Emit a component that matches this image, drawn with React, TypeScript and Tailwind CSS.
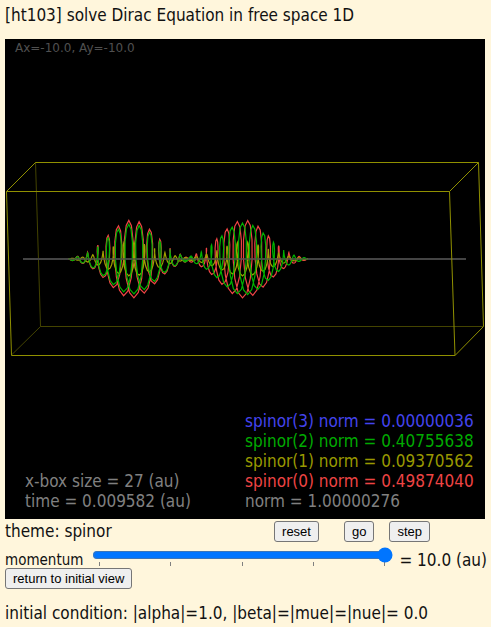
import { useState, type ReactNode } from "react";

type Packet = { center: number; amplitude: number; phaseX: number };

const AXIS_Y = 220;
const PERIOD = 10.3;
const SIGMA = 23.7;
const REACH = 64;
const STEPS = 12;

const LEFT = 127;
const RIGHT = 239;

/** Projects a complex wave packet as a spiral wound round the x axis. */
function spiral({ center, amplitude, phaseX }: Packet) {
  const points: string[] = [];
  for (let i = -7 * STEPS; i <= 7 * STEPS; i++) {
    const theta = (i / STEPS) * 2 * Math.PI;
    const x = phaseX + (theta / (2 * Math.PI)) * PERIOD;
    if (Math.abs(x - center) > REACH) continue;
    const envelope = amplitude * Math.exp(-((x - center) ** 2) / (2 * SIGMA ** 2));
    const px = x - envelope * 0.18 * Math.sin(theta);
    const py = AXIS_Y - envelope * Math.cos(theta);
    points.push(`${px.toFixed(1)},${py.toFixed(1)}`);
  }
  return points.join(" ");
}

const curves = [
  { color: "#ee4444", packet: { center: LEFT, amplitude: 39, phaseX: 123.8 } },
  { color: "#ee4444", packet: { center: RIGHT, amplitude: 39, phaseX: 242.7 } },
  { color: "#a0a000", packet: { center: LEFT, amplitude: 17, phaseX: 129 } },
  { color: "#a0a000", packet: { center: RIGHT, amplitude: 17, phaseX: 242.7 } },
  { color: "#00b400", packet: { center: LEFT, amplitude: 35, phaseX: 123.8 } },
  { color: "#00b400", packet: { center: RIGHT, amplitude: 36, phaseX: 237.5 } },
];

function Scene() {
  return (
    <svg viewBox="0 0 480 480" className="block w-full" fill="none" role="img" aria-label="Dirac spinor wave packets">
      <g stroke="#444400">
        <path d="M30.5 123L35.5 287.5H478" />
        <path d="M35.5 287.5L7 315.5" />
      </g>
      <path d="M18 220H461" stroke="#444444" strokeWidth="2" />
      {curves.map(({ color, packet }, i) => (
        <polyline key={i} points={spiral(packet)} stroke={color} strokeWidth="1.2" />
      ))}
      <path d="M18 220H461" stroke="#444444" strokeWidth="2" opacity="0.6" />
      <g stroke="#909000">
        <path d="M1.5 152.5H444.5L450 316.5H6.5Z" />
        <path d="M1.5 152.5L30.5 123.5H473.5L444.5 152.5" />
        <path d="M450 316.5L478.5 287.5L473.5 123.5" />
      </g>
    </svg>
  );
}

function Button({ children, onClick }: { children: ReactNode; onClick?: () => void }) {
  return (
    <button
      type="button"
      onClick={onClick}
      className="h-[21px] rounded-[3px] border border-[#767676] bg-[#efefef] px-[7px] font-['Liberation_Sans',sans-serif] text-[13px] leading-[19px] text-black"
    >
      {children}
    </button>
  );
}

export default function App() {
  const [momentum, setMomentum] = useState(10);

  return (
    <main className="min-h-screen bg-[#fff6dc] pr-1.5 pl-[5px] font-['DejaVu_Sans_Condensed','DejaVu_Sans',sans-serif] text-[17px] leading-6 text-[#111]">
      <h1 className="pt-[3px] pb-3">[ht103] solve Dirac Equation in free space 1D</h1>

      <section className="relative bg-black">
        <Scene />
        <p className="absolute top-0 left-2.5 font-['DejaVu_Sans',sans-serif] text-[12px] leading-[18px] text-[#505050]">
          Ax=-10.0, Ay=-10.0
        </p>
        <div className="absolute inset-x-0 bottom-2 grid grid-cols-2 items-end leading-5 text-[#808080]">
          <div className="pl-5">
            <p>x-box size = 27 (au)</p>
            <p>time = 0.009582 (au)</p>
          </div>
          <div className="whitespace-nowrap">
            <p className="text-[#4444ee]">spinor(3) norm = 0.00000036</p>
            <p className="text-[#00aa00]">spinor(2) norm = 0.40755638</p>
            <p className="text-[#999900]">spinor(1) norm = 0.09370562</p>
            <p className="text-[#ee4444]">spinor(0) norm = 0.49874040</p>
            <p>norm = 1.00000276</p>
          </div>
        </div>
      </section>

      <div className="flex h-[25px] items-start justify-between pr-[55px]">
        <p>theme: spinor</p>
        <div className="flex pt-0.5">
          <Button>reset</Button>
          <div className="ml-[25px] flex gap-[15px]">
            <Button>go</Button>
            <Button>step</Button>
          </div>
        </div>
      </div>

      <div className="flex h-6 items-start">
        <label htmlFor="momentum" className="w-[85px] pt-1 text-[15px]">
          momentum
        </label>
        <input
          id="momentum"
          type="range"
          min={0}
          max={10}
          step={0.1}
          value={momentum}
          list="momentum-ticks"
          onChange={(e) => setMomentum(Number(e.target.value))}
          className="mx-0.5 min-w-0 flex-1 text-[#808080] accent-[#0075ff]"
        />
        <datalist id="momentum-ticks">
          <option value="0" />
          <option value="2.5" />
          <option value="5" />
          <option value="7.5" />
          <option value="10" />
        </datalist>
        <output htmlFor="momentum" className="-mr-0.5 pt-1 pl-1 whitespace-nowrap">
          = {momentum.toFixed(1)} (au)
        </output>
      </div>

      <div className="flex">
        <Button onClick={() => setMomentum(10)}>return to initial view</Button>
      </div>

      <p className="pt-3">initial condition: |alpha|=1.0, |beta|=|mue|=|nue|= 0.0</p>
    </main>
  );
}
